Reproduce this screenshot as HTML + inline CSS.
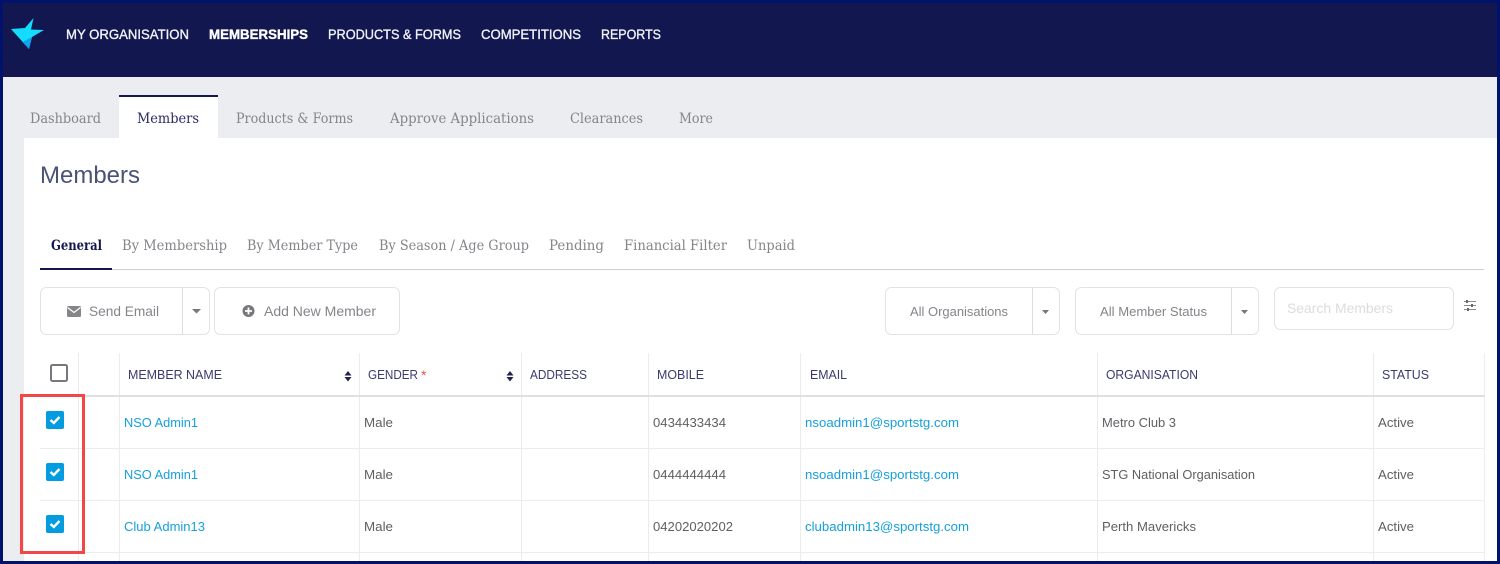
<!DOCTYPE html>
<html lang="en">
<head>
<meta charset="utf-8">
<title>Members</title>
<style>
html,body{margin:0;padding:0;background:#fff}
body{width:1500px;height:564px;overflow:hidden;position:relative}
svg{position:absolute;left:0;top:0;display:block}
.n{font:14px "Liberation Sans",sans-serif;fill:#f2f3f8;stroke:#f2f3f8;stroke-width:.35px}
.t{font:14px "DejaVu Serif",serif;fill:#85858a}
.s{font:14px "DejaVu Serif",serif;fill:#85858a}
.b{font:14px "Liberation Sans",sans-serif;fill:#85858a}
.f{font:13px "Liberation Sans",sans-serif;fill:#85858a}
.h{font:12.5px "Liberation Sans",sans-serif;fill:#3a3a70}
.c{font:12.5px "Liberation Sans",sans-serif;fill:#5f5f63}
.l{font:12.5px "Liberation Sans",sans-serif;fill:#159fdd}
</style>
</head>
<body>
<svg width="1500" height="564" viewBox="0 0 1500 564" xmlns="http://www.w3.org/2000/svg">
<rect width="1500" height="564" fill="#00126b"/>
<rect x="3" y="3" width="1494" height="558" fill="#ffffff"/>
<rect x="3" y="3" width="1494" height="74" fill="#12174f"/>
<rect x="3" y="77" width="1494" height="61" fill="#ecedf0"/>
<rect x="3" y="138" width="21" height="423" fill="#ecedf0"/>

<polygon points="11,29 25,28 33.500,18 31,29.500 44,30 32,37 29,49" fill="#14dcff"/>
<polygon points="22.500,42 32,37 29,49" fill="#0ea4ee"/>

<text class="n" x="66" y="39" textLength="123" lengthAdjust="spacingAndGlyphs">MY ORGANISATION</text>
<text class="n" x="209" y="39" textLength="99" lengthAdjust="spacingAndGlyphs" style="font-weight:700;fill:#fff;stroke:#fff">MEMBERSHIPS</text>
<text class="n" x="328" y="39" textLength="133" lengthAdjust="spacingAndGlyphs">PRODUCTS &amp; FORMS</text>
<text class="n" x="481" y="39" textLength="100" lengthAdjust="spacingAndGlyphs">COMPETITIONS</text>
<text class="n" x="601" y="39" textLength="60" lengthAdjust="spacingAndGlyphs">REPORTS</text>

<rect x="119" y="97" width="99" height="41" fill="#fff"/>
<rect x="119" y="95" width="99" height="2" fill="#12174f"/>
<text class="t" x="30" y="123" textLength="71" lengthAdjust="spacingAndGlyphs">Dashboard</text>
<text class="t" x="137" y="123" textLength="62" lengthAdjust="spacingAndGlyphs" style="fill:#2a2a68">Members</text>
<text class="t" x="236" y="123" textLength="117" lengthAdjust="spacingAndGlyphs">Products &amp; Forms</text>
<text class="t" x="390" y="123" textLength="144" lengthAdjust="spacingAndGlyphs">Approve Applications</text>
<text class="t" x="570" y="123" textLength="73" lengthAdjust="spacingAndGlyphs">Clearances</text>
<text class="t" x="679" y="123" textLength="34" lengthAdjust="spacingAndGlyphs">More</text>

<text x="40" y="183" textLength="100" lengthAdjust="spacingAndGlyphs" style="font:24px 'Liberation Sans',sans-serif;fill:#4a5278">Members</text>

<text class="s" x="51" y="250" textLength="51" lengthAdjust="spacingAndGlyphs" style="font-weight:700;fill:#12174f">General</text>
<text class="s" x="122" y="250" textLength="105" lengthAdjust="spacingAndGlyphs">By Membership</text>
<text class="s" x="247" y="250" textLength="111" lengthAdjust="spacingAndGlyphs">By Member Type</text>
<text class="s" x="379" y="250" textLength="150" lengthAdjust="spacingAndGlyphs">By Season / Age Group</text>
<text class="s" x="549" y="250" textLength="55" lengthAdjust="spacingAndGlyphs">Pending</text>
<text class="s" x="624" y="250" textLength="103" lengthAdjust="spacingAndGlyphs">Financial Filter</text>
<text class="s" x="747" y="250" textLength="48" lengthAdjust="spacingAndGlyphs">Unpaid</text>
<rect x="40" y="269" width="1444" height="1" fill="#cfcfd2"/>
<rect x="40" y="268" width="72" height="2" fill="#12174f"/>

<g fill="#fff" stroke="#e2e2e4">
<rect x="40.5" y="287.5" width="169" height="47" rx="6"/>
<rect x="214.5" y="287.5" width="185" height="47" rx="6"/>
<rect x="885.5" y="287.5" width="174" height="47" rx="6"/>
<rect x="1075.5" y="287.5" width="183" height="47" rx="6"/>
<rect x="1274.5" y="287.5" width="179" height="42" rx="6"/>
</g>
<g fill="#dedee0">
<rect x="182" y="288" width="1" height="46"/>
<rect x="1032" y="288" width="1" height="46"/>
<rect x="1231" y="288" width="1" height="46"/>
</g>
<rect x="67" y="306" width="14" height="11" rx="1.5" fill="#85858a"/>
<path d="M67.5 307.5 74 312.5 80.5 307.5" fill="none" stroke="#fff" stroke-width="1.2"/>
<text class="b" x="89" y="316" textLength="70" lengthAdjust="spacingAndGlyphs">Send Email</text>
<polygon points="192,309 201,309 196.5,313.5" fill="#77777c"/>
<circle cx="248.500" cy="311" r="6" fill="#77777c"/>
<path d="M245 311h7M248.500 307.500v7" stroke="#fff" stroke-width="1.8"/>
<text class="b" x="264" y="316" textLength="112" lengthAdjust="spacingAndGlyphs">Add New Member</text>
<text class="f" x="910" y="316" textLength="98" lengthAdjust="spacingAndGlyphs">All Organisations</text>
<polygon points="1042,310 1049,310 1045.500,314" fill="#77777c"/>
<text class="f" x="1100" y="316" textLength="107" lengthAdjust="spacingAndGlyphs">All Member Status</text>
<polygon points="1241,310 1248,310 1244.500,314" fill="#77777c"/>
<text class="f" x="1287" y="313" textLength="106" lengthAdjust="spacingAndGlyphs" style="font-size:14px;fill:#dcdcde">Search Members</text>
<g stroke="#8a8a90" stroke-width="1" fill="none">
<path d="M1464 301.500h12M1464 305.500h12M1464 309.500h12"/>
</g>
<g fill="#66666c">
<rect x="1466" y="300" width="2" height="3"/>
<rect x="1471" y="304" width="2" height="3"/>
<rect x="1467" y="308" width="2" height="3"/>
</g>

<g fill="#ececee">
<rect x="78" y="353" width="1" height="208"/>
<rect x="119" y="353" width="1" height="208"/>
<rect x="359" y="353" width="1" height="208"/>
<rect x="521" y="353" width="1" height="208"/>
<rect x="648" y="353" width="1" height="208"/>
<rect x="800" y="353" width="1" height="208"/>
<rect x="1097" y="353" width="1" height="208"/>
<rect x="1373" y="353" width="1" height="208"/>
<rect x="1484" y="353" width="1" height="208"/>
<rect x="40" y="448" width="1444" height="1"/>
<rect x="40" y="500" width="1444" height="1"/>
<rect x="40" y="552" width="1444" height="1"/>
</g>
<rect x="40" y="395" width="1445" height="2" fill="#dfdfe1"/>

<rect x="51" y="365" width="16" height="16" rx="1.500" fill="#fff" stroke="#77777c" stroke-width="2"/>
<text class="h" x="128" y="379" textLength="94" lengthAdjust="spacingAndGlyphs">MEMBER NAME</text>
<text class="h" x="368" y="379" textLength="50" lengthAdjust="spacingAndGlyphs">GENDER</text>
<text x="421" y="380" style="font:14px 'Liberation Sans',sans-serif;fill:#f05050">*</text>
<text class="h" x="530" y="379" textLength="57" lengthAdjust="spacingAndGlyphs">ADDRESS</text>
<text class="h" x="657" y="379" textLength="47" lengthAdjust="spacingAndGlyphs">MOBILE</text>
<text class="h" x="810" y="379" textLength="37" lengthAdjust="spacingAndGlyphs">EMAIL</text>
<text class="h" x="1106" y="379" textLength="92" lengthAdjust="spacingAndGlyphs">ORGANISATION</text>
<text class="h" x="1382" y="379" textLength="47" lengthAdjust="spacingAndGlyphs">STATUS</text>
<g fill="#22224a">
<polygon points="344.500,375.500 351.500,375.500 348,371"/><polygon points="344.500,377 351.500,377 348,381.500"/>
<polygon points="506.500,375.500 513.500,375.500 510,371"/><polygon points="506.500,377 513.500,377 510,381.500"/>
</g>

<text class="l" x="124" y="427" textLength="74" lengthAdjust="spacingAndGlyphs">NSO Admin1</text>
<text class="c" x="364" y="427" textLength="29" lengthAdjust="spacingAndGlyphs">Male</text>
<text class="c" x="653" y="427" textLength="73" lengthAdjust="spacingAndGlyphs">0434433434</text>
<text class="l" x="805" y="427" textLength="154" lengthAdjust="spacingAndGlyphs">nsoadmin1@sportstg.com</text>
<text class="c" x="1102" y="427" textLength="74" lengthAdjust="spacingAndGlyphs">Metro Club 3</text>
<text class="c" x="1378" y="427" textLength="36" lengthAdjust="spacingAndGlyphs">Active</text>

<text class="l" x="124" y="479" textLength="74" lengthAdjust="spacingAndGlyphs">NSO Admin1</text>
<text class="c" x="364" y="479" textLength="29" lengthAdjust="spacingAndGlyphs">Male</text>
<text class="c" x="653" y="479" textLength="73" lengthAdjust="spacingAndGlyphs">0444444444</text>
<text class="l" x="805" y="479" textLength="154" lengthAdjust="spacingAndGlyphs">nsoadmin1@sportstg.com</text>
<text class="c" x="1102" y="479" textLength="153" lengthAdjust="spacingAndGlyphs">STG National Organisation</text>
<text class="c" x="1378" y="479" textLength="36" lengthAdjust="spacingAndGlyphs">Active</text>

<text class="l" x="124" y="531" textLength="81" lengthAdjust="spacingAndGlyphs">Club Admin13</text>
<text class="c" x="364" y="531" textLength="29" lengthAdjust="spacingAndGlyphs">Male</text>
<text class="c" x="653" y="531" textLength="80" lengthAdjust="spacingAndGlyphs">04202020202</text>
<text class="l" x="805" y="531" textLength="164" lengthAdjust="spacingAndGlyphs">clubadmin13@sportstg.com</text>
<text class="c" x="1102" y="531" textLength="94" lengthAdjust="spacingAndGlyphs">Perth Mavericks</text>
<text class="c" x="1378" y="531" textLength="36" lengthAdjust="spacingAndGlyphs">Active</text>

<g>
<rect x="46" y="411" width="18" height="18" rx="2" fill="#049ce0"/>
<path d="M50.500 420 53.800 423 59.500 417" fill="none" stroke="#fff" stroke-width="2.400"/>
<rect x="46" y="463" width="18" height="18" rx="2" fill="#049ce0"/>
<path d="M50.500 472 53.800 475 59.500 469" fill="none" stroke="#fff" stroke-width="2.400"/>
<rect x="46" y="515" width="18" height="18" rx="2" fill="#049ce0"/>
<path d="M50.500 524 53.800 527 59.500 521" fill="none" stroke="#fff" stroke-width="2.400"/>
</g>
<rect x="21.500" y="395.500" width="62" height="157" fill="none" stroke="#f44646" stroke-width="3"/>
</svg>
</body>
</html>
